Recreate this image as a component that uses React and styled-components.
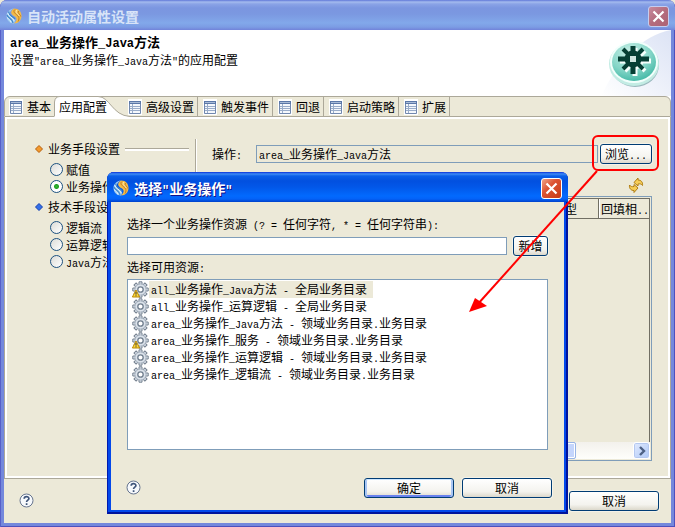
import React from 'react';
import styled, { createGlobalStyle, css } from 'styled-components';

const Global = createGlobalStyle`
  * { box-sizing: border-box; }
  html, body { margin: 0; background: #ece9d8; }
  body, button, input {
    font-family: 'Noto Sans CJK SC', sans-serif;
    font-size: 12px;
    line-height: 16px;
    color: #000;
  }
`;

const Latin = styled.span`
  font-family: 'Liberation Mono', monospace;
  font-size: ${(p) => (p.$large ? 12 : 10)}px;
  line-height: 0;
  white-space: pre;
`;

function Text({ children, large }) {
  return children
    .split(/([\x20-\x7e]+)/)
    .filter(Boolean)
    .map((part, i) =>
      /^[\x20-\x7e]/.test(part) ? <Latin key={i} $large={large}>{part}</Latin> : part
    );
}

const Desktop = styled.div`
  position: relative;
  min-height: 100vh;
  display: flex;
`;

const Window = styled.section`
  flex: 1;
  min-width: 0;
  display: flex;
  flex-direction: column;
  padding: 0 4px 4px;
  border-radius: 7px 7px 0 0;
  overflow: hidden;
  background: #7488dc;
  box-shadow: inset 1px 0 #5860c8, inset -1px -1px #4d50bd;
`;

const TitleBar = styled.header`
  height: 30px;
  flex: none;
  margin: 0 -4px;
  padding: 2px 6px 0;
  display: flex;
  align-items: center;
  gap: 5px;
  border-radius: 7px 7px 0 0;
  color: ${(p) => (p.$active ? '#fff' : '#d8e4f8')};
  background: ${(p) =>
    p.$active
      ? 'linear-gradient(#0831d9 0, #3f8cf5 2px, #0a5fe8 4px, #0250df 9px, #0257e8 15px, #026afe 24px, #0462f8 27px, #0041c9 30px)'
      : 'linear-gradient(#6078d8 0, #a4bbee 2px, #8aa3e6 4px, #7b96e0 8px, #7b98e1 14px, #82a8ea 23px, #7c9ce4 27px, #7183d9 30px)'};
  ${(p) => p.$active && css`text-shadow: 1px 1px #0f1089;`}
`;

const WindowTitle = styled.h1`
  flex: 1;
  margin: 0;
  font-size: 14px;
  line-height: 20px;
  font-weight: 700;
`;

const CloseButton = styled.button`
  width: 21px;
  height: 21px;
  padding: 0;
  display: grid;
  place-items: center;
  border: 1px solid ${(p) => (p.$active ? '#fff' : '#c4cdf0')};
  border-radius: 3px;
  background: ${(p) =>
    p.$active
      ? 'linear-gradient(135deg, #f0a68a, #dc5433 40%, #c53a17)'
      : 'linear-gradient(135deg, #c78b9e, #b46c7d 50%, #ad6274)'};
`;

const Banner = styled.div`
  position: relative;
  height: 66px;
  padding: 3px 6px;
  background: #fff;
`;

const BannerTitle = styled.h2`
  margin: 0;
  font-size: 13px;
  line-height: 18px;
`;

const BannerText = styled.p`
  margin: 0;
  line-height: 18px;
`;

const BannerArt = styled.svg`
  position: absolute;
  right: 0;
  top: 0;
`;

const TabFrame = styled.div`
  background: #fff;
`;

const TabList = styled.div`
  height: 21px;
  display: flex;
  border: 1px solid #aca899;
  border-radius: 6px 6px 0 0;
  background: #ece9d8;
`;

const Tab = styled.button`
  position: relative;
  height: 19px;
  padding: ${(p) => (p.$selected ? '0 16px 0 5px' : '0 3px 0 5px')};
  display: flex;
  align-items: center;
  gap: 4px;
  border: 0;
  border-right: ${(p) => (p.$rule ? '1px solid #aca899' : '0')};
  background: none;
  white-space: nowrap;
  &:first-child { padding-left: 4px; }
`;

const TabShape = styled.svg`
  position: absolute;
  left: 0;
  top: -1px;
`;

const TabLabel = styled.span`
  position: relative;
`;

const Panel = styled.div`
  flex: 1;
  display: flex;
  padding: 22px 18px 17px 28px;
  border: 1px solid #aca899;
  border-top: 0;
  box-shadow: inset 0 0 0 2px #fff;
  background: #ece9d8;
`;

const Methods = styled.form`
  width: 162px;
  flex: none;
  padding: 2px 6px 0 2px;
  display: flex;
  flex-direction: column;
  gap: 4px;
`;

const GroupTitle = styled.h3`
  margin: 0;
  display: flex;
  align-items: center;
  gap: 5px;
  font-size: 12px;
  font-weight: 400;
  white-space: nowrap;
  &::after {
    content: '';
    flex: 1;
    height: 2px;
    border-top: 1px solid #aca899;
    background: #fff;
  }
`;

const RadioGroup = styled.div`
  padding-left: 15px;
`;

const RadioLabel = styled.label`
  height: 17px;
  display: flex;
  align-items: center;
  gap: 3px;
  white-space: nowrap;
`;

const Radio = styled.input`
  appearance: none;
  width: 13px;
  height: 13px;
  margin: 0;
  border: 1px solid #1d5281;
  border-radius: 50%;
  background: linear-gradient(135deg, #dcdcd7, #fff);
  &:checked {
    background: radial-gradient(circle, #38b838 0, #21a121 2px, #fff 3px);
  }
`;

const Details = styled.div`
  flex: 1;
  min-width: 0;
  padding: 5px 0 0 16px;
  border-left: 1px solid #aca899;
  box-shadow: inset 1px 0 #fff;
  display: flex;
  flex-direction: column;
`;

const FieldRow = styled.div`
  display: flex;
  align-items: center;
  gap: ${(p) => p.$gap}px;
`;

const FieldLabel = styled.label`
  width: 42px;
  white-space: nowrap;
`;

const Field = styled.input`
  flex: 1;
  min-width: 0;
  height: 18px;
  padding: 0 2px;
  border: 1px solid #7f9db9;
  border-radius: 0;
  outline: 0;
  background: #fff;
`;

const Readout = styled.output`
  flex: 1;
  min-width: 0;
  height: 18px;
  padding: 0 2px;
  border: 1px solid #7f9db9;
  white-space: nowrap;
`;

const Button = styled.button`
  height: 20px;
  padding: 0;
  width: ${(p) => p.$width}px;
  border: 1px solid #003c74;
  border-radius: 3px;
  background: linear-gradient(#fff, #f4f3ee 70%, #dcd8cb);
  box-shadow: 0 0 0 1px #f4f2e8;
  line-height: 16px;
  white-space: nowrap;
  ${(p) => p.$primary && css`
    box-shadow: inset 0 1px #cee7ff, inset 2px 0 #a9c6f4, inset -2px 0 #a9c6f4, inset 0 -2px #6982ee;
  `}
`;

const IconButton = styled.button`
  align-self: flex-end;
  width: 16px;
  height: 16px;
  margin: 13px 8px 3px;
  padding: 0;
  border: 0;
  background: none;
`;

const GridBox = styled.div`
  flex: 1;
  min-height: 240px;
  display: flex;
  flex-direction: column;
  border: 1px solid #7f9db9;
  padding: 1px;
`;

const GridArea = styled.div`
  flex: 1;
  border: 1px solid #716f64;
  border-bottom: 0;
  overflow: hidden;
`;

const Grid = styled.table`
  width: 100%;
  table-layout: fixed;
  border-collapse: separate;
  border-spacing: 0;
  th {
    height: 20px;
    padding: 0 3px;
    border-right: 1px solid #716f64;
    border-bottom: 1px solid #716f64;
    box-shadow: inset 1px 0 #fff;
    font-weight: 400;
    text-align: left;
    white-space: nowrap;
  }
  th:last-child {
    padding: 0 0 0 2px;
    border-right: 0;
  }
`;

const ScrollBar = styled.div`
  height: 17px;
  display: flex;
  justify-content: space-between;
  background: linear-gradient(#f3f1ec, #fefefb);
`;

const Thumb = styled.div`
  width: calc(100% - 74px);
  border: 1px solid #98b4e6;
  border-radius: 2px;
  box-shadow: inset 0 0 0 1px #fff;
  background: #c4d5fc;
`;

const ScrollButton = styled.button`
  width: 17px;
  padding: 0;
  display: grid;
  place-items: center;
  border: 1px solid #fff;
  border-radius: 3px;
  background: linear-gradient(135deg, #e1eafe, #aec8f7);
  box-shadow: inset 0 0 0 1px #b4c8f0;
`;

const Footer = styled.footer`
  display: flex;
  align-items: center;
  gap: 8px;
  padding: 12px;
  background: #ece9d8;
`;

const HelpButton = styled.button`
  width: 16px;
  height: 16px;
  margin: 0 auto 0 2px;
  padding: 0;
  border: 0;
  background: none;
`;

const Dialog = styled.section`
  position: absolute;
  left: 107px;
  right: 107px;
  top: 172px;
  padding: 0 4px 4px;
  border-radius: 7px 7px 0 0;
  background: #0348ea;
  box-shadow: inset 1px 0 #0019b0, inset -2px -2px #00139c;
`;

const DialogBody = styled.div`
  padding: 14px 16px 16px;
  background: #ece9d8;
`;

const Caption = styled.label`
  display: block;
  margin-bottom: 4px;
  white-space: nowrap;
`;

const SearchRow = styled(FieldRow)`
  margin-bottom: 3px;
`;

const ResourceList = styled.ul`
  margin: 0;
  padding: 1px 4px;
  min-height: 171px;
  border: 1px solid #7f9db9;
  background: #fff;
  list-style: none;
`;

const Resource = styled.li`
  height: 17px;
  display: flex;
  white-space: nowrap;
`;

const ResourceName = styled.span`
  padding: 0 6px 0 2px;
  height: 17px;
  background: ${(p) => (p.$selected ? '#ece9d8' : 'none')};
`;

const Callout = styled.svg`
  position: absolute;
  top: 130px;
  right: 10px;
  pointer-events: none;
`;

const Logo = () => (
  <svg width="16" height="16" viewBox="0 0 16 16" fill="none" aria-hidden="true">
    <path d="M8 .5C3 1 .5 4.500.5 8c0 4 3 7.500 7.500 7.500C11 12 7 10 4.500 8 2.500 6 4 2.500 8 .5z" fill="#9cc9ef" />
    <path d="M8 .5c5 0 7.500 3.500 7.500 7.500 0 4-3 7.500-7.500 7.500C12 12 11 9.500 8 8 4.500 6 4 3 8 .5z" fill="#f3bb48" />
    <path d="M1 7c1 3.500 5.500 3.500 6 8M3 3.500c-1.500 4 4 4.500 6 7.500" stroke="#3f86c8" strokeWidth="1.200" />
    <path d="M1 9.500c2 2 3.500 2.500 4 5M1.700 5c.8 4 5.300 4 6.500 8" stroke="#e4f3ff" />
    <path d="M9 1.500c-3 2.500 1 4.500 3 6.500 1.500 1.700 1 4 0 5.500M12.500 3c-1 2.500 1.500 3 2.300 5.500" stroke="#c07c26" />
    <path d="M11 2c-2.500 2.500 1 4 2.500 6" stroke="#fff0bb" />
  </svg>
);

const Cross = () => (
  <svg width="13" height="13" viewBox="0 0 13 13" stroke="#fff" strokeWidth="2.200" aria-hidden="true">
    <path d="M1.500 1.500l10 10M11.500 1.500l-10 10" />
  </svg>
);

const SheetIcon = () => (
  <svg width="14" height="16" viewBox="0 0 14 16" aria-hidden="true">
    <path fill="#fff" d="M0 0h14v16H0z" />
    <path fill="#5b78a8" d="M1 2h12v3H1z" />
    <path fill="#a9bcd8" d="M2 3h10v1H2z" />
    <path d="M1.500 5v9.500h11V5" fill="#f5f8fc" stroke="#7188ae" />
    <path d="M2 7.500h10M2 9.500h10M2 11.500h10M4.500 5v9" stroke="#9aadca" />
  </svg>
);

const Diamond = ({ color, edge }) => (
  <svg width="8" height="8" viewBox="0 0 8 8" aria-hidden="true">
    <path d="M4 .5L7.500 4 4 7.500.5 4z" fill={color} stroke={edge} />
  </svg>
);

const spokes = [0, 45, 90, 135, 180, 225, 270, 315];

const GearIcon = ({ warning }) => (
  <svg width="17" height="17" viewBox="0 0 17 17" aria-hidden="true">
    {spokes.map((a) => (
      <path key={a} d="M7 .8h3v4H7z" fill="#dbe2ea" stroke="#75818f" transform={`rotate(${a} 8.500 8.500)`} />
    ))}
    <circle cx="8.500" cy="8.500" r="5.600" fill="#dbe2ea" stroke="#a3afbd" />
    <circle cx="8.500" cy="8.500" r="2.700" fill="#fff" stroke="#6f7d8d" strokeWidth="1.300" />
    {warning && (
      <g>
        <path d="M4 9l3.600 7H.4z" fill="#ffd83b" stroke="#ba8a08" />
        <path d="M4 11v2.600M4 14.300v1" stroke="#333" />
      </g>
    )}
  </svg>
);

const HelpIcon = () => (
  <svg width="15" height="15" viewBox="0 0 15 15" fill="none" aria-hidden="true">
    <circle cx="7.500" cy="7.500" r="6.500" fill="#f7f9fc" stroke="#66758f" />
    <path d="M5.200 5.800c0-3 4.700-2.800 4.700-.3 0 1.600-2.300 1.600-2.300 3.400M7.600 10.200v1.700" stroke="#3e5479" strokeWidth="1.700" />
  </svg>
);

const RefreshIcon = () => (
  <svg width="16" height="16" viewBox="0 0 16 16" fill="#f6ce58" stroke="#b07d12" strokeLinejoin="round" aria-hidden="true">
    <path d="M6 5.500L10 1v2c3 0 5 2 4.500 5.500-1-1.500-2.500-2-4.500-1.500v2z" />
    <path d="M10 11l-4 4.500v-2c-3 0-5-2-4.500-5.500 1 1.500 2.500 2 4.500 1.500v-2z" />
  </svg>
);

const Emblem = () => (
  <BannerArt width="70" height="66" viewBox="0 0 70 66" aria-hidden="true">
    <defs>
      <linearGradient id="sweep" x1="0" y1="1" x2="1" y2="0">
        <stop offset="0" stopColor="#fff" />
        <stop offset="1" stopColor="#dce3f5" />
      </linearGradient>
      <radialGradient id="disc" cx=".4" cy=".25" r=".8">
        <stop offset="0" stopColor="#c9f0e7" />
        <stop offset=".6" stopColor="#83d5c7" />
        <stop offset="1" stopColor="#3fb7a4" />
      </radialGradient>
    </defs>
    <path d="M70 0C40 6 18 30 0 66h70z" fill="url(#sweep)" />
    <ellipse cx="34" cy="35" rx="24" ry="22" fill="#9ab8bd" />
    <ellipse cx="33" cy="34" rx="25" ry="22" fill="#c3ece4" />
    <ellipse cx="33" cy="32" rx="24" ry="21" fill="#f2fffc" />
    <ellipse cx="33" cy="32" rx="22" ry="19" fill="url(#disc)" />
    {[['#f4fffc', 2], ['#053f34', 0]].map(([color, shift]) => (
      <g key={color} stroke={color} strokeWidth="5" transform={`translate(${shift} ${shift})`}>
        <path d="M32 16v28M17 29h31" />
        <path d="M22 19l20 20M42 19L22 39" strokeWidth="4" />
        <circle cx="32" cy="29" r="6" fill={color} />
      </g>
    ))}
    <path d="M29 26h6v6h-6z" fill="#cfe6e0" />
  </BannerArt>
);

const tabs = [
  { name: '基本' },
  { name: '应用配置', selected: true },
  { name: '高级设置', rule: true },
  { name: '触发事件', rule: true },
  { name: '回退', rule: true },
  { name: '启动策略', rule: true },
  { name: '扩展', rule: true },
];

const methodGroups = [
  { title: '业务手段设置', color: '#f49a2c', edge: '#b55f0c', options: ['赋值', '业务操作'] },
  { title: '技术手段设置', color: '#3470e8', edge: '#123fae', options: ['逻辑流', '运算逻辑', 'Java方法'] },
];

const resources = [
  { name: 'all_业务操作_Java方法 - 全局业务目录', warning: true, selected: true },
  { name: 'all_业务操作_运算逻辑 - 全局业务目录' },
  { name: 'area_业务操作_Java方法 - 领域业务目录.业务目录' },
  { name: 'area_业务操作_服务 - 领域业务目录.业务目录', warning: true },
  { name: 'area_业务操作_运算逻辑 - 领域业务目录.业务目录' },
  { name: 'area_业务操作_逻辑流 - 领域业务目录.业务目录' },
];

function ResourceDialog() {
  return (
    <Dialog role="dialog" aria-labelledby="dialog-title">
      <TitleBar $active>
        <Logo />
        <WindowTitle id="dialog-title"><Text large>选择"业务操作"</Text></WindowTitle>
        <CloseButton $active aria-label="关闭"><Cross /></CloseButton>
      </TitleBar>
      <DialogBody>
        <Caption htmlFor="filter"><Text>选择一个业务操作资源 (? = 任何字符, * = 任何字符串):</Text></Caption>
        <SearchRow $gap={6}>
          <Field id="filter" />
          <Button $width={35}>新增</Button>
        </SearchRow>
        <Caption as="div" id="resources-label"><Text>选择可用资源:</Text></Caption>
        <ResourceList role="listbox" aria-labelledby="resources-label">
          {resources.map((r) => (
            <Resource key={r.name} role="option" aria-selected={!!r.selected}>
              <GearIcon warning={r.warning} />
              <ResourceName $selected={r.selected}><Text>{r.name}</Text></ResourceName>
            </Resource>
          ))}
        </ResourceList>
      </DialogBody>
      <Footer>
        <HelpButton aria-label="帮助"><HelpIcon /></HelpButton>
        <Button $width={90} $primary>确定</Button>
        <Button $width={90}>取消</Button>
      </Footer>
    </Dialog>
  );
}

export default function App() {
  return (
    <Desktop>
      <Global />
      <Window>
        <TitleBar>
          <Logo />
          <WindowTitle>自动活动属性设置</WindowTitle>
          <CloseButton aria-label="关闭"><Cross /></CloseButton>
        </TitleBar>
        <Banner>
          <Emblem />
          <BannerTitle><Text large>area_业务操作_Java方法</Text></BannerTitle>
          <BannerText><Text>设置"area_业务操作_Java方法"的应用配置</Text></BannerText>
        </Banner>
        <TabFrame>
          <TabList role="tablist">
            {tabs.map((t) => (
              <Tab key={t.name} role="tab" aria-selected={!!t.selected} $selected={t.selected} $rule={t.rule}>
                {t.selected ? (
                  <TabShape width="78" height="22" viewBox="0 0 78 22" aria-hidden="true">
                    <path d="M.5 22V6Q1 .5 6 .5h38c12 0 14 19 32 20V22z" fill="#fff" />
                    <path d="M.5 20V6Q1 .5 6 .5h38c12 0 14 19 32 20" fill="none" stroke="#aca899" />
                  </TabShape>
                ) : (
                  <SheetIcon />
                )}
                <TabLabel>{t.name}</TabLabel>
              </Tab>
            ))}
          </TabList>
        </TabFrame>
        <Panel role="tabpanel">
          <Methods>
            {methodGroups.map((g) => (
              <React.Fragment key={g.title}>
                <GroupTitle><Diamond color={g.color} edge={g.edge} />{g.title}</GroupTitle>
                <RadioGroup role="radiogroup" aria-label={g.title}>
                  {g.options.map((o) => (
                    <RadioLabel key={o}>
                      <Radio type="radio" name="method" defaultChecked={o === '业务操作'} />
                      <span><Text>{o}</Text></span>
                    </RadioLabel>
                  ))}
                </RadioGroup>
              </React.Fragment>
            ))}
          </Methods>
          <Details>
            <FieldRow $gap={2}>
              <FieldLabel htmlFor="operation"><Text>操作:</Text></FieldLabel>
              <Readout id="operation"><Text>area_业务操作_Java方法</Text></Readout>
              <Button $width={52}><Text>浏览...</Text></Button>
            </FieldRow>
            <IconButton aria-label="刷新"><RefreshIcon /></IconButton>
            <GridBox>
              <GridArea>
                <Grid>
                  <colgroup><col /><col width="49" /><col width="50" /></colgroup>
                  <thead><tr><th /><th>类型</th><th><Text>回填相..</Text></th></tr></thead>
                </Grid>
              </GridArea>
              <ScrollBar>
                <Thumb />
                <ScrollButton aria-label="向右滚动">
                  <svg width="8" height="10" viewBox="0 0 8 10" fill="none" stroke="#4d6185" strokeWidth="2.400">
                    <path d="M2 1l4 4-4 4" />
                  </svg>
                </ScrollButton>
              </ScrollBar>
            </GridBox>
          </Details>
        </Panel>
        <Footer>
          <HelpButton aria-label="帮助"><HelpIcon /></HelpButton>
          <Button $width={90}>取消</Button>
        </Footer>
      </Window>
      <ResourceDialog />
      <Callout width="200" height="190" viewBox="0 0 200 190" aria-hidden="true">
        <rect x="128" y="6" width="65" height="34" rx="5" fill="none" stroke="#f00" strokeWidth="2" />
        <path d="M132 41L12 175" stroke="#f00" strokeWidth="2" />
        <path d="M4 182l6-14 12 8z" fill="#f00" />
      </Callout>
    </Desktop>
  );
}
